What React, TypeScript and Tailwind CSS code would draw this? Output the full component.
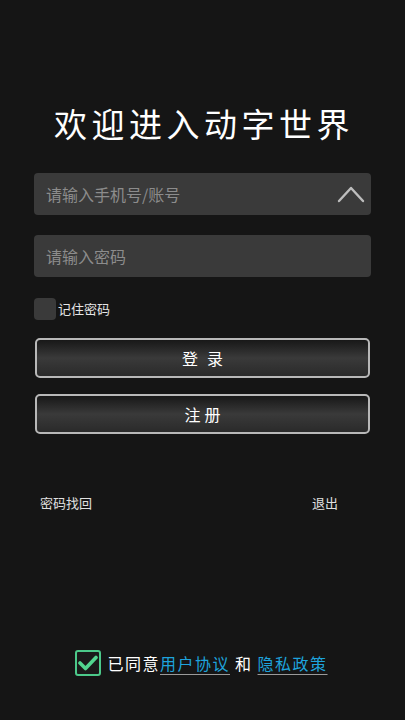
import { useState } from "react";

const FONT = { fontFamily: '"Noto Sans CJK SC", "Noto Sans", sans-serif' };

export default function App() {
  const [remember, setRemember] = useState(false);
  const [agree, setAgree] = useState(true);

  return (
    <div className="w-[405px] h-[720px] bg-[#151515] flex flex-col text-white" style={FONT}>
      {/* Title */}
      <h1 className="mt-[99px] text-center text-[33px] leading-[48px] tracking-[4.5px] pl-[3px] font-normal text-white">
        欢迎进入动字世界
      </h1>

      <div className="mt-[26px] px-[34px] flex flex-col">
        {/* Account */}
        <div className="h-[42px] rounded-[4px] bg-[#3a3a3a] flex items-center pl-[12px] pr-[6px]">
          <input
            className="flex-1 bg-transparent outline-none text-[16px] text-white placeholder:text-[#8c8c8c]"
            placeholder="请输入手机号/账号"
          />
          <svg width="28" height="20" viewBox="0 0 28 20" fill="none">
            <path d="M2 17 L14 4 L26 17" stroke="#bdbdbd" strokeWidth="2.4" strokeLinecap="round" strokeLinejoin="round" />
          </svg>
        </div>

        {/* Password */}
        <div className="mt-[20px] h-[42px] rounded-[4px] bg-[#3a3a3a] flex items-center px-[12px]">
          <input
            type="password"
            className="flex-1 bg-transparent outline-none text-[16px] text-white placeholder:text-[#8c8c8c]"
            placeholder="请输入密码"
          />
        </div>

        {/* Remember */}
        <label className="mt-[20px] flex items-center gap-[2px] cursor-pointer">
          <span
            onClick={() => setRemember(!remember)}
            className="w-[22px] h-[22px] rounded-[4px] bg-[#3a3a3a]"
          />
          <span className="text-[13px] text-[#e6e6e6] leading-[22px] mt-[1px]">记住密码</span>
        </label>

        {/* Buttons */}
        <button className="mt-[18px] mx-[1px] h-[40px] rounded-[5px] border-2 border-[#b8b8b8] bg-gradient-to-b from-[#181818] via-[#3a3a3a] to-[#2a2a2a] text-[16px] tracking-[9px] pl-[9px] text-white">
          登录
        </button>
        <button className="mt-[16px] mx-[1px] h-[40px] rounded-[5px] border-2 border-[#b8b8b8] bg-gradient-to-b from-[#181818] via-[#3a3a3a] to-[#2a2a2a] text-[16px] tracking-[4px] pl-[4px] text-white">
          注册
        </button>

        {/* Links */}
        <div className="mt-[59px] flex justify-between px-[6px] pr-[33px] text-[13px] text-[#e0e0e0]">
          <span>密码找回</span>
          <span>退出</span>
        </div>
      </div>

      <div className="flex-1" />

      {/* Agreement */}
      <div className="mb-[44px] flex items-center justify-center gap-[6px] pr-[2px]">
        <span
          onClick={() => setAgree(!agree)}
          className="w-[26px] h-[26px] rounded-[3px] border-2 border-[#4cc98a] bg-[#1a1a1a] flex items-center justify-center"
        >
          {agree && (
            <svg width="20" height="16" viewBox="0 0 20 16" fill="none">
              <path d="M2 8 L7.5 13.5 L18 2.5" stroke="#52d68f" strokeWidth="3.6" strokeLinecap="round" strokeLinejoin="round" />
            </svg>
          )}
        </span>
        <span className="text-[16px] leading-[26px] text-white tracking-[1.5px]">
          已同意
          <span className="text-[#1ea3dc] underline underline-offset-[4px] decoration-[#9a9a9a]">用户协议</span>
          <span className="mx-[5px]">和</span>
          <span className="text-[#1ea3dc] underline underline-offset-[4px] decoration-[#9a9a9a]">隐私政策</span>
        </span>
      </div>
    </div>
  );
}
